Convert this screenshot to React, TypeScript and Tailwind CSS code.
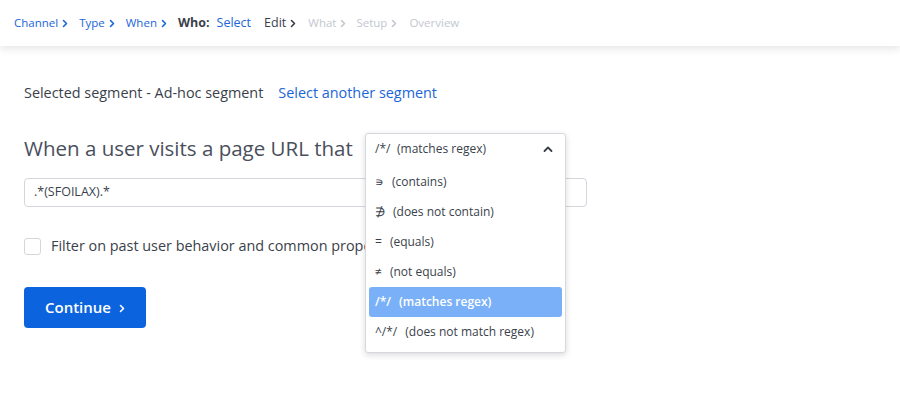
import React from "react";

const font = { fontFamily: "'Open Sans', Lato, sans-serif" };

function Chevron({ className = "" }: { className?: string }) {
  return (
    <svg
      className={className}
      width="6"
      height="9"
      viewBox="0 0 6 9"
      fill="none"
      stroke="currentColor"
      strokeWidth="1.6"
      strokeLinecap="round"
      strokeLinejoin="round"
    >
      <path d="M1.5 1.5 L4.5 4.5 L1.5 7.5" />
    </svg>
  );
}

const crumbs = ["Channel", "Type", "When"];

const options = [
  { sym: "∍", label: "(contains)" },
  { sym: "∌", label: "(does not contain)" },
  { sym: "=", label: "(equals)" },
  { sym: "≠", label: "(not equals)" },
  { sym: "/*/", label: "(matches regex)", active: true },
  { sym: "^/*/", label: "(does not match regex)" },
];

export default function App() {
  return (
    <div
      className="relative w-[900px] h-[400px] bg-white overflow-hidden text-[#3a3f4b]"
      style={font}
    >
      {/* Breadcrumb */}
      <header className="relative z-10 h-[46px] flex items-center px-[14px] bg-white shadow-[0_3px_8px_rgba(0,0,0,0.10)] text-[11.5px]">
        {crumbs.map((c) => (
          <span
            key={c}
            className="flex items-center gap-[4px] mr-[11px] text-[#1a66d8]"
          >
            {c}
            <Chevron />
          </span>
        ))}
        <span className="font-bold text-[#3a3f4b] mr-[7px] text-[12.5px]">Who:</span>
        <span className="text-[#1a66d8] text-[12.5px] mr-[13px]">Select</span>
        <span className="flex items-center gap-[4px] text-[12.5px] text-[#3a3f4b] mr-[12px]">
          Edit
          <Chevron />
        </span>
        <span className="flex items-center gap-[4px] text-[#c3c7cf] mr-[10px]">
          What
          <Chevron />
        </span>
        <span className="flex items-center gap-[4px] text-[#c3c7cf] mr-[12px]">
          Setup
          <Chevron />
        </span>
        <span className="text-[#c3c7cf]">Overview</span>
      </header>

      <main className="relative px-6 pt-[37px]">
        <div className="flex items-center h-5 text-[14.4px]">
          <span className="text-[#3a3f4b]">Selected segment - Ad-hoc segment</span>
          <span className="ml-[15px] text-[#1a66d8]">Select another segment</span>
        </div>

        <h2 className="mt-[31px] h-7 flex items-center text-[20.5px] text-[#4a4f5c]">
          When a user visits a page URL that
        </h2>

        <div className="mt-[16px] w-[563px] h-[29px] flex items-center px-[9px] border border-[#d4d6dc] rounded-[4px] text-[12.5px] text-[#3a3f4b]">
          .*(SFOILAX).*
        </div>

        <label className="mt-[29px] h-5 flex items-center gap-[10px] text-[14.4px] text-[#3a3f4b]">
          <span className="w-[17px] h-[17px] border border-[#d4d6dc] rounded-[3px] bg-white" />
          Filter on past user behavior and common properties
        </label>

        <button className="mt-[31px] w-[122px] h-[41px] flex items-center justify-center gap-[8px] rounded-[4px] bg-[#0b63de] text-white text-[15px] font-semibold">
          Continue
          <Chevron className="mt-[1px]" />
        </button>

        {/* Operator dropdown */}
        <div className="absolute left-[365px] top-[87px] w-[201px] bg-white border border-[#d6d8de] rounded-[3px] shadow-[0_2px_6px_rgba(0,0,0,0.15)] text-[12px] text-[#3a3f4b]">
          <div className="h-[30px] flex items-center pl-[9px] pr-[12px]">
            <span className="w-[22px]">/*/</span>
            <span>(matches regex)</span>
            <svg
              className="ml-auto"
              width="10"
              height="7"
              viewBox="0 0 10 7"
              fill="none"
              stroke="currentColor"
              strokeWidth="1.8"
              strokeLinecap="round"
              strokeLinejoin="round"
            >
              <path d="M1.5 5 L5 1.5 L8.5 5" />
            </svg>
          </div>
          <ul className="pt-[3px] pb-[5px]">
            {options.map((o) => (
              <li
                key={o.label}
                className={
                  o.active
                    ? "mx-[3px] h-[30px] flex items-center gap-[8px] px-[6px] rounded-[3px] bg-[#7ab0f8] text-white font-semibold"
                    : "h-[30px] flex items-center gap-[8px] px-[9px]"
                }
              >
                <span>{o.sym}</span>
                <span>{o.label}</span>
              </li>
            ))}
          </ul>
        </div>
      </main>
    </div>
  );
}
